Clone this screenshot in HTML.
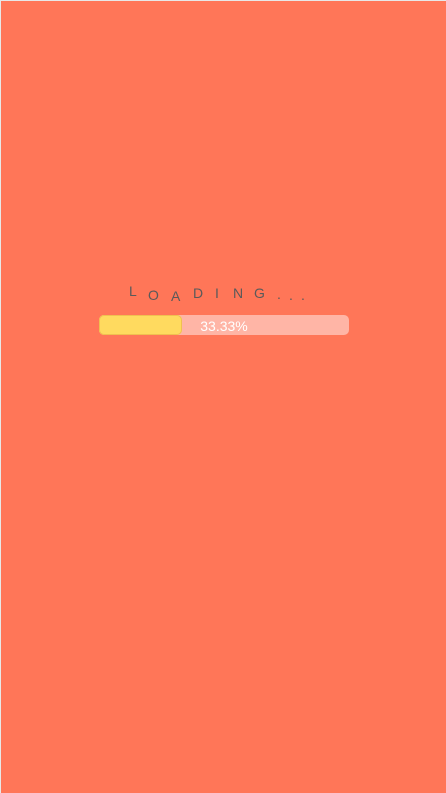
<!DOCTYPE html>
<html><head><style>
html,body{margin:0;padding:0;width:446px;height:793px;background:#ff7658;overflow:hidden;}
body{position:relative;font-family:"Liberation Sans",sans-serif;box-shadow:inset 1px 1px 0 #e8e8e8;}
.l{position:absolute;font-size:14px;color:#5a5a5a;line-height:1;}
.bar{position:absolute;left:99px;top:315px;width:250px;height:20px;border-radius:5px;background:#ffb5a6;}
.fill{position:absolute;left:0;top:0;width:83px;height:20px;border-radius:5px;background:#ffda5f;box-shadow:inset 0 0 0 1px #f0c050;}
.t{position:absolute;left:0;width:250px;top:1px;line-height:20px;text-align:center;color:#fff;font-size:14px;}
</style></head><body>
<span class="l" style="left:129px;top:284px">L</span>
<span class="l" style="left:148px;top:288px">O</span>
<span class="l" style="left:171px;top:289px">A</span>
<span class="l" style="left:193px;top:286px">D</span>
<span class="l" style="left:215px;top:286px">I</span>
<span class="l" style="left:233px;top:286px">N</span>
<span class="l" style="left:254px;top:286px">G</span>
<span class="l" style="left:277px;top:287px">.</span>
<span class="l" style="left:289px;top:288px">.</span>
<span class="l" style="left:301px;top:288px">.</span>
<div class="bar"><div class="fill"></div><div class="t">33.33%</div></div>
</body></html>
